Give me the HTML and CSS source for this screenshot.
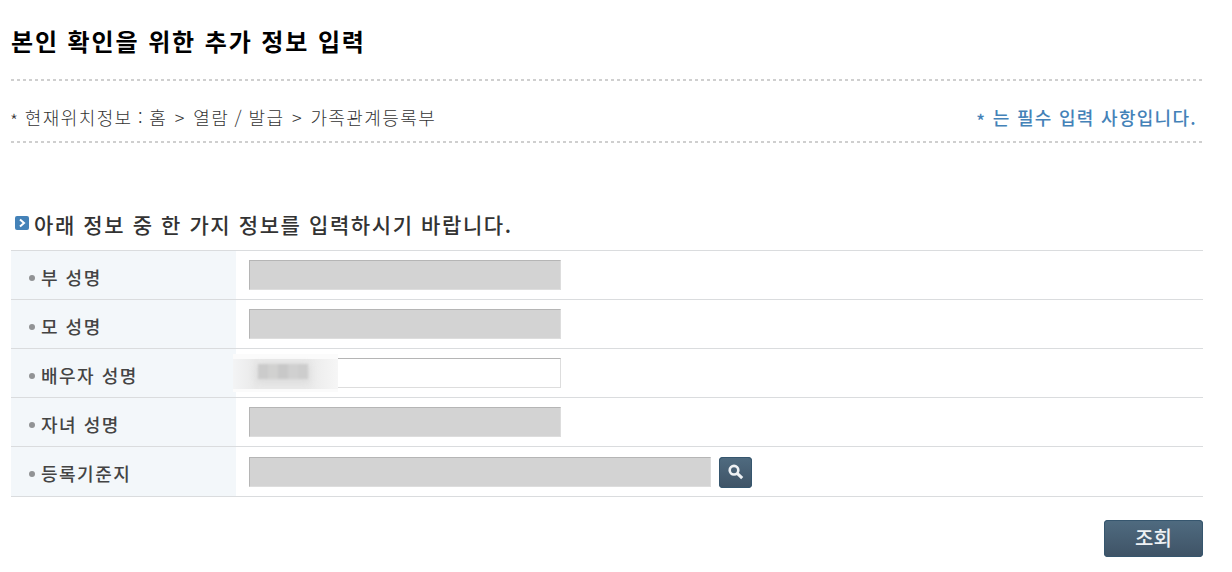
FILE: index.html
```
<!DOCTYPE html>
<html lang="ko">
<head>
    <meta charset="UTF-8">
    <meta name="viewport" content="width=device-width, initial-scale=1.0">
    <title>본인 확인을 위한 추가 정보 입력</title>
    <link rel="stylesheet" href="styles.css">
</head>
<body>
    <div class="container">
        <h1>본인 확인을 위한 추가 정보 입력</h1>
        <div class="location">
            <p class="path"><span class="star">*</span> 현재위치정보 : 홈 <span class="gt">&gt;</span> 열람 / 발급 <span class="gt">&gt;</span> 가족관계등록부</p>
            <p class="required"><span class="star">*</span> 는 필수 입력 사항입니다.</p>
        </div>
        <h2>
            <svg class="arrow" width="14" height="14" viewBox="0 0 14 14">
                <rect width="14" height="14" rx="2" fill="#4482b8"/>
                <path d="M5 3.5L9 7L5 10.5" fill="none" stroke="#fff" stroke-width="2"/>
            </svg>
            <span>아래 정보 중 한 가지 정보를 입력하시기 바랍니다.</span>
        </h2>
        <form>
            <div class="row">
                <label for="father">부 성명</label>
                <div class="field"><input type="text" id="father" disabled></div>
            </div>
            <div class="row">
                <label for="mother">모 성명</label>
                <div class="field"><input type="text" id="mother" disabled></div>
            </div>
            <div class="row">
                <label for="spouse">배우자 성명</label>
                <div class="field">
                    <input type="text" id="spouse">
                    <div class="mask"><div class="mask-name"></div></div>
                </div>
            </div>
            <div class="row">
                <label for="child">자녀 성명</label>
                <div class="field"><input type="text" id="child" disabled></div>
            </div>
            <div class="row last">
                <label for="address">등록기준지</label>
                <div class="field">
                    <input type="text" id="address" class="wide" disabled>
                    <button type="button" class="search-btn" aria-label="검색">
                        <svg width="33" height="31" viewBox="0 0 33 31">
                            <circle cx="15" cy="13.2" r="4.3" fill="none" stroke="#eef1f4" stroke-width="2.6"/>
                            <path d="M18.2 16.4L23.2 21.2" stroke="#eef1f4" stroke-width="3"/>
                        </svg>
                    </button>
                </div>
            </div>
            <div class="buttons">
                <button type="button" class="submit-btn">조회</button>
            </div>
        </form>
    </div>
</body>
</html>
```
FILE: styles.css
```
* {
    margin: 0;
    padding: 0;
    box-sizing: border-box;
}
body {
    background-color: #fff;
    font-family: "Noto Sans CJK KR", sans-serif;
    color: #444;
}
.container {
    width: 1192px;
    margin-left: 11px;
}
h1 {
    height: 79px;
    padding-top: 5px;
    line-height: 72px;
    font-size: 24px;
    font-weight: 700;
    letter-spacing: 1.9px;
    color: #000;
}
.location {
    display: flex;
    justify-content: space-between;
    height: 64px;
    padding: 14px 6px 0 0;
    /* dashed line on top and bottom */
    background:
        repeating-linear-gradient(90deg, #cfcfcf 0 3px, #fff 3px 6px) 0 0 / 100% 2px no-repeat,
        repeating-linear-gradient(90deg, #cfcfcf 0 3px, #fff 3px 6px) 0 62px / 100% 2px no-repeat;
    line-height: 48px;
    font-size: 18px;
}
.path {
    font-weight: 300;
    letter-spacing: 1.4px;
    word-spacing: -1px;
    color: #333;
}
.star {
    display: inline-block;
    height: 42px;
    margin-left: -1px;
    vertical-align: -3px;
    line-height: 42px;
}
.gt {
    margin: 0 2px;
}
.required {
    font-weight: 500;
    letter-spacing: 1.3px;
    color: #4482b8;
}
h2 {
    display: flex;
    height: 107px;
    padding: 62px 0 0 4px;
    line-height: 38px;
    font-size: 21px;
    font-weight: 500;
    letter-spacing: 1.6px;
    color: #333;
}
.arrow {
    margin: 11px 5px 0 0;
}
.row {
    display: flex;
    height: 49px;
    border-top: 1px solid #dadcde;
}
.last {
    height: 51px;
    border-bottom: 1px solid #dadcde;
}
label {
    display: flex;
    align-items: flex-start;
    width: 225px;
    padding: 11px 0 0 18px;
    background-color: #f3f7fa;
    font-size: 18px;
    font-weight: 500;
    letter-spacing: 1.5px;
    line-height: 30px;
}
label::before {
    content: "";
    width: 6px;
    height: 6px;
    margin: 13px 6px 0 0;
    border-radius: 50%;
    background-color: #919395;
}
.field {
    position: relative;
    display: flex;
    align-items: flex-start;
    padding: 9px 0 0 13px;
}
.last .field {
    padding-top: 10px;
}
input {
    width: 312px;
    height: 30px;
    border: 1px solid #ddd;
    border-top-color: #b5b5b5;
    border-left-color: #b5b5b5;
    background-color: #fff;
}
input:disabled {
    background-color: #d3d3d3;
}
.wide {
    width: 462px;
}
.mask {
    position: absolute;
    left: -3px;
    top: 5px;
    width: 105px;
    height: 38px;
    border: solid #fbfbfb;
    border-width: 5px 0 3px;
    background: linear-gradient(90deg, #f3f4f5, #e9e9e9 22%, #e9e9e9 70%, #f6f6f6);
}
.mask-name {
    width: 50px;
    height: 15px;
    margin: 5px 0 0 25px;
    background: linear-gradient(90deg, #cbcbcb 0 10px, #d1d1d0 10px 20px, #c8c8c8 20px 30px, #d0d0d0 30px 40px, #cdcdcd 40px);
    box-shadow: 0 2px 7px 2px #dcdcdc;
    filter: blur(1px);
}
.search-btn {
    width: 33px;
    height: 31px;
    margin-left: 8px;
    border: none;
    border-radius: 4px;
    background: linear-gradient(#4f6b80, #3f5366);
    box-shadow: inset 0 0 0 1px #36566e;
}
.search-btn svg {
    display: block;
}
.buttons {
    display: flex;
    justify-content: flex-end;
    margin-top: 23px;
}
.submit-btn {
    width: 99px;
    height: 37px;
    padding-bottom: 2px;
    border: none;
    border-radius: 4px;
    background: linear-gradient(#4f6b80, #3f5366);
    box-shadow: inset 0 0 0 1px #36566e;
    color: #eef1f4;
    font-family: "Noto Sans CJK KR", sans-serif;
    font-size: 20px;
    font-weight: 500;
}
```
